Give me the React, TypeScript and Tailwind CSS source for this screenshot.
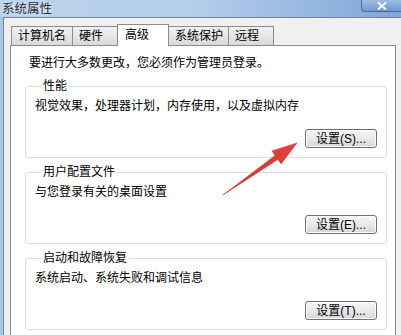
import React from 'react';

const tabs = [
  { label: '计算机名', w: 'w-[61px]' },
  { label: '硬件', w: 'w-[46px]' },
  { label: '高级', w: 'w-[52px]' },
  { label: '系统保护', w: 'w-[60px]' },
  { label: '远程', w: 'w-[46px]' },
];

const groups = [
  { title: '性能', desc: '视觉效果，处理器计划，内存使用，以及虚拟内存', btn: '设置(S)...' },
  { title: '用户配置文件', desc: '与您登录有关的桌面设置', btn: '设置(E)...' },
  { title: '启动和故障恢复', desc: '系统启动、系统失败和调试信息', btn: '设置(T)...' },
];

function SettingsButton({ label }: { label: string }) {
  return (
    <button className="w-[72px] h-[19px] rounded-[3px] border border-[#707070] bg-gradient-to-b from-[#f6f6f6] via-[#e9e9e9] to-[#d6d6d6] text-[12px] leading-none text-black shadow-[inset_0_0_0_1px_#fcfcfc]">
      {label}
    </button>
  );
}

function Group({ title, desc, btn }: { title: string; desc: string; btn: string }) {
  return (
    <fieldset className="border border-[#d5dfe5] rounded-[3px] pl-[9px] pr-[9px] pb-[9px]">
      <legend className="ml-[6px] px-[2px] text-[12px] leading-[16px]">{title}</legend>
      <div className="pt-[4px] text-[12px] leading-[16px]">{desc}</div>
      <div className="flex justify-end mt-[15px]">
        <SettingsButton label={btn} />
      </div>
    </fieldset>
  );
}

export default function App() {
  return (
    <div
      className="relative w-[401px] h-[335px] overflow-hidden flex flex-col bg-[#a9c6e8] text-black"
      style={{ fontFamily: '"Liberation Sans", "Noto Sans CJK SC", sans-serif' }}
    >
      {/* title bar */}
      <div className="h-[20px] flex items-start justify-between bg-gradient-to-r from-[#bcd3ec] via-[#b3cdea] to-[#7fa6d9]">
        <span className="pl-[2px] pt-[1px] text-[12.5px] leading-[16px] text-[#1e2a3a] [text-shadow:0_0_4px_#ffffff]">系统属性</span>
        <div className="w-[40px] h-[12px] rounded-bl-[4px] border border-t-0 border-r-0 border-[#4a6c9c] bg-gradient-to-b from-[#9dbde6] to-[#6e98d0] flex items-center justify-center">
          <svg width="10" height="8" viewBox="0 0 10 8">
            <path d="M1 0.5 L9 7.5 M9 0.5 L1 7.5" stroke="#ffffff" strokeWidth="2" />
          </svg>
        </div>
      </div>

      {/* window body */}
      <div className="flex-1 ml-[3px] border-l border-t border-[#6f84a0] bg-[#f0f0f0] pl-[6px] pt-[6px]">
        <div className="flex items-end h-[21px] pl-[1px]">
          {tabs.map((t) =>
            t.label === '高级' ? (
              <div
                key={t.label}
                className={`relative z-10 h-[22px] -mb-[1px] -mx-[1px] pl-[7px] border border-b-0 border-[#898c95] bg-white text-[12px] leading-[20px] ${t.w}`}
              >
                {t.label}
              </div>
            ) : (
              <div
                key={t.label}
                className={`h-[19px] pl-[6px] border border-b-0 border-r-0 last:border-r border-[#898c95] bg-gradient-to-b from-[#f2f2f2] to-[#d9d9d9] text-[12px] leading-[18px] ${t.w}`}
              >
                {t.label}
              </div>
            )
          )}
        </div>
        <div className="w-[386px] h-[300px] border border-[#898c95] bg-white pl-[14px] pr-[8px] pt-[9px]">
          <div className="pl-[4px] text-[12px] leading-[16px]">要进行大多数更改，您必须作为管理员登录。</div>
          <div className="mt-[7px] flex flex-col gap-[6px]">
            {groups.map((g) => (
              <Group key={g.title} {...g} />
            ))}
          </div>
        </div>
      </div>

      {/* red annotation arrow */}
      <svg className="absolute inset-0 pointer-events-none" width="401" height="335" viewBox="0 0 401 335">
        <defs>
          <linearGradient id="arr" x1="0" y1="1" x2="1" y2="0">
            <stop offset="0" stopColor="#b83a3a" />
            <stop offset="1" stopColor="#e8403c" />
          </linearGradient>
        </defs>
        <polygon
          points="223,195 275.1,155.4 271.9,150.9 297,143 281.1,163.9 277.9,159.4"
          fill="url(#arr)"
          stroke="#d83a36"
          strokeWidth="0.6"
          strokeLinejoin="round"
        />
      </svg>
    </div>
  );
}
